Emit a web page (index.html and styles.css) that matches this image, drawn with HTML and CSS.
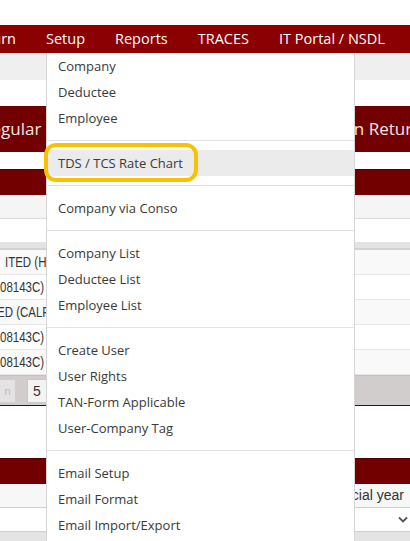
FILE: index.html
```html
<!DOCTYPE html>
<html lang="en">
<head>
    <meta charset="UTF-8">
    <meta name="viewport" content="width=device-width, initial-scale=1.0">
    <title>TDS - Setup</title>
    <link rel="stylesheet" href="styles.css">
</head>
<body>
    <div class="page">
        <div class="top-space"></div>

        <!-- Main menu bar -->
        <nav class="menubar">
            <div class="menu-first"><a href="#">Return</a></div>
            <a href="#">Setup</a>
            <a href="#">Reports</a>
            <a href="#">TRACES</a>
            <a href="#">IT Portal / NSDL</a>
        </nav>
        <div class="subbar"></div>
        <div class="gap-26"></div>

        <div class="title-band">
            <span class="tab-left">Regular Return</span>
            <span class="tab-right">Correction Return</span>
        </div>
        <div class="gap-17"></div>

        <!-- Company list panel -->
        <section class="panel">
            <div class="panel-head"></div>
            <div class="panel-toolbar"></div>
            <div class="panel-space"></div>
            <div class="grid-head"></div>
            <div class="grid-row"><span class="cell wide">ITED (HYD</span></div>
            <div class="grid-row"><span class="cell">08143C)</span></div>
            <div class="grid-row"><span class="cell tight">ED (CALF</span></div>
            <div class="grid-row"><span class="cell">08143C)</span></div>
            <div class="grid-row"><span class="cell">08143C)</span></div>
            <div class="pager">
                <span class="page-btn faded">n</span>
                <span class="page-btn current">5</span>
            </div>
        </section>
        <div class="gap-52"></div>

        <!-- Financial year panel -->
        <section class="panel">
            <div class="panel-head"></div>
            <div class="fy-label">Financial year</div>
            <div class="fy-select">
                <svg width="10" height="7" viewBox="0 0 10 7"><polyline points="1,1.5 5,5.5 9,1.5" fill="none" stroke="#555" stroke-width="1.8"/></svg>
            </div>
            <div class="fy-foot"></div>
        </section>
    </div>

    <!-- Setup dropdown (open) -->
    <ul class="dropdown">
        <li><a href="#">Company</a></li>
        <li><a href="#">Deductee</a></li>
        <li><a href="#">Employee</a></li>
        <li class="divider"></li>
        <li class="hover"><a href="#">TDS / TCS Rate Chart</a></li>
        <li class="divider"></li>
        <li><a href="#">Company via Conso</a></li>
        <li class="divider"></li>
        <li><a href="#">Company List</a></li>
        <li><a href="#">Deductee List</a></li>
        <li><a href="#">Employee List</a></li>
        <li class="divider"></li>
        <li><a href="#">Create User</a></li>
        <li><a href="#">User Rights</a></li>
        <li><a href="#">TAN-Form Applicable</a></li>
        <li><a href="#">User-Company Tag</a></li>
        <li class="divider"></li>
        <li><a href="#">Email Setup</a></li>
        <li><a href="#">Email Format</a></li>
        <li><a href="#">Email Import/Export</a></li>
    </ul>
    <div class="highlight-mark"></div>
</body>
</html>
```

FILE: styles.css
```css
body {
    margin: 0;
    font-family: "Open Sans", sans-serif;
    background: white;
    overflow: hidden;
    position: relative;
    height: 541px;
}
a {
    text-decoration: none;
    color: inherit;
}
.top-space {
    height: 25px;
}
.menubar {
    display: flex;
    height: 28px;
    background: #8b0000;
    color: white;
    font-size: 14.5px;
    line-height: 28px;
    white-space: nowrap;
}
.menubar a {
    padding: 0 15px;
}
.menu-first {
    width: 31px;
    display: flex;
    justify-content: flex-end;
    overflow: hidden;
}
.subbar {
    height: 27px;
    background: #efefef;
}
.gap-26 {
    height: 26px;
}
.gap-17 {
    height: 17px;
}
.gap-52 {
    height: 52px;
}
.title-band {
    display: flex;
    height: 46px;
    background: #720000;
    color: #f6e4e4;
    font-size: 17px;
    line-height: 46px;
    white-space: nowrap;
    overflow: hidden;
}
.tab-left {
    margin-left: -19px;
}
.tab-right {
    margin-left: 181px;
}
.panel-head {
    height: 25px;
    border-top: 1px solid #4d0000;
    background: #720000;
}
.panel-toolbar {
    height: 23px;
    background: #f5f5f5;
    border-bottom: 1px solid #dcdcdc;
}
.panel-space {
    height: 23px;
}
.grid-head {
    height: 6px;
    background: #e3e3e3;
    border-bottom: 2px solid #d2d2d2;
}
.grid-row {
    height: 24px;
    border-bottom: 1px solid #e6e6e6;
    font-family: "Liberation Sans", Arial, sans-serif;
    font-size: 14px;
    line-height: 24px;
    color: #333;
    white-space: nowrap;
}
.grid-row:nth-of-type(odd) {
    background: #f9f9f9;
}
/* the grid font is a narrow face; squeeze Arial-width text to match */
.cell {
    display: inline-block;
    transform: scaleX(0.82);
    transform-origin: left center;
}
.cell.wide {
    margin-left: 5px;
}
.cell.tight {
    margin-left: -3px;
}
.pager {
    display: flex;
    align-items: center;
    gap: 12px;
    height: 29px;
    background: #d2cdcd;
    border-top: 1px solid #c4c0c0;
    border-bottom: 1px solid #5a0000;
    font-family: "Liberation Sans", Arial, sans-serif;
    font-size: 14px;
    color: #333;
}
.page-btn {
    display: inline-block;
    height: 22px;
    line-height: 22px;
    text-align: center;
}
.page-btn.faded {
    width: 15px;
    background: #e4e2e2;
    color: #bbb;
    font-size: 11px;
}
.page-btn.current {
    width: 18px;
    padding-right: 2px;
    background: #f4f3f3;
    border: 1px solid #c9c6c6;
}
.fy-label {
    height: 23px;
    line-height: 23px;
    background: #f7f7f7;
    border-bottom: 1px solid #cfcfcf;
    font-family: "Liberation Sans", Arial, sans-serif;
    font-size: 14px;
    color: #333;
    text-align: right;
    padding-right: 6px;
}
.fy-select {
    height: 23px;
    display: flex;
    align-items: center;
    justify-content: flex-end;
    padding-right: 2px;
    border-bottom: 1px solid #cfcfcf;
}
.fy-foot {
    height: 10px;
    background: #e4e4e4;
}

/* dropdown overlay */
.dropdown {
    position: absolute;
    left: 46px;
    top: 53px;
    width: 309px;
    box-sizing: border-box;
    height: 500px;
    margin: 0;
    padding: 0;
    list-style: none;
    background: white;
    border-left: 1px solid #d6d6d6;
    border-right: 1px solid #d6d6d6;
    font-size: 13px;
    color: #3a3a3a;
}
.dropdown li a {
    display: block;
    height: 26px;
    line-height: 26px;
    padding: 0 11px;
}
.dropdown li.hover {
    background: #ebebeb;
}
.dropdown .divider {
    height: 1px;
    margin: 9px 0;
    background: #e3e3e3;
}
.highlight-mark {
    position: absolute;
    left: 44px;
    top: 143px;
    width: 154px;
    height: 39px;
    box-sizing: border-box;
    border: 4px solid #f7c203;
    border-radius: 12px;
}
```
